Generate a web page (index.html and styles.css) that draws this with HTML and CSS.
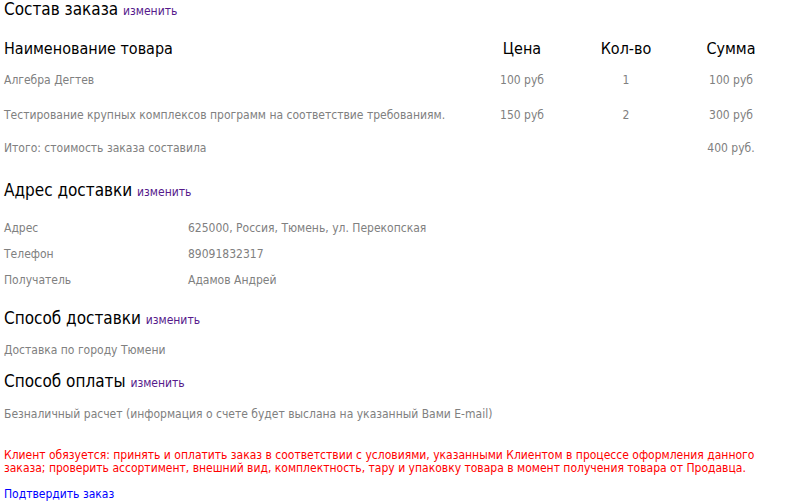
FILE: index.html
```html
<!DOCTYPE html>
<html lang="ru">
<head>
    <meta charset="UTF-8">
    <title>Оформление заказа</title>
    <link rel="stylesheet" href="styles.css">
</head>
<body>
    <!-- Состав заказа -->
    <h2 class="section-title order-title">Состав заказа <a href="#" class="edit-link">изменить</a></h2>
    <table class="order-table">
        <tr class="head-row">
            <th class="col-name">Наименование товара</th>
            <th class="col-price">Цена</th>
            <th class="col-qty">Кол-во</th>
            <th class="col-sum">Сумма</th>
        </tr>
        <tr class="row-1">
            <td>Алгебра Дегтев</td>
            <td class="center">100 руб</td>
            <td class="center qty">1</td>
            <td class="center">100 руб</td>
        </tr>
        <tr class="row-2">
            <td>Тестирование крупных комплексов программ на соответствие требованиям.</td>
            <td class="center">150 руб</td>
            <td class="center">2</td>
            <td class="center">300 руб</td>
        </tr>
        <tr class="total-row">
            <td colspan="3">Итого: стоимость заказа составила</td>
            <td class="center">400 руб.</td>
        </tr>
    </table>

    <!-- Адрес доставки -->
    <h2 class="section-title address-title">Адрес доставки <a href="#" class="edit-link">изменить</a></h2>
    <div class="address">
        <div class="address-row"><span class="label">Адрес</span><span>625000, Россия, Тюмень, ул. Перекопская</span></div>
        <div class="address-row"><span class="label">Телефон</span><span>89091832317</span></div>
        <div class="address-row"><span class="label">Получатель</span><span>Адамов Андрей</span></div>
    </div>

    <!-- Способ доставки -->
    <h2 class="section-title delivery-title">Способ доставки <a href="#" class="edit-link">изменить</a></h2>
    <p class="info">Доставка по городу Тюмени</p>

    <!-- Способ оплаты -->
    <h2 class="section-title payment-title">Способ оплаты <a href="#" class="edit-link">изменить</a></h2>
    <p class="info payment-info">Безналичный расчет (информация о счете будет выслана на указанный Вами E-mail)</p>

    <p class="notice">Клиент обязуется: принять и оплатить заказ в соответствии с условиями, указанными Клиентом в процессе оформления данного заказа; проверить ассортимент, внешний вид, комплектность, тару и упаковку товара в момент получения товара от Продавца.</p>

    <a href="#" class="confirm-link">Подтвердить заказ</a>
</body>
</html>
```

FILE: styles.css
```css
body {
    margin: 0;
    padding: 0 4px;
    background-color: #ffffff;
    font-family: "DejaVu Sans Condensed", "DejaVu Sans", sans-serif;
    font-stretch: condensed;
    font-size: 12px;
    color: #808080;
}

.section-title {
    margin: 0;
    font-size: 17px;
    font-weight: normal;
    line-height: 20px;
    color: #000000;
}

.order-title {
    line-height: 18px;
}

.edit-link {
    font-size: 12px;
    line-height: 1;
    color: #551a8b;
    text-decoration: none;
}

.order-table {
    width: 780px;
    margin-top: 15px;
    border-collapse: collapse;
}

.order-table th,
.order-table td {
    padding: 0;
    text-align: left;
}

.order-table th {
    font-size: 16px;
    font-weight: normal;
    color: #000000;
    height: 31px;
}

.order-table .col-name {
    width: 466px;
}

.order-table .col-price,
.order-table .col-qty {
    width: 104px;
    text-align: center;
}

.order-table .col-sum {
    width: 106px;
    text-align: center;
}

.order-table td.center {
    text-align: center;
}

.row-1 td {
    height: 32px;
}

.row-2 td {
    height: 38px;
}

.total-row td {
    height: 28px;
}

.address-title {
    margin-top: 18px;
}

.address {
    margin-top: 15px;
}

.address-row {
    display: flex;
    height: 26px;
    align-items: center;
}

.address-row .label {
    width: 184px;
}

.delivery-title {
    margin-top: 15px;
}

.info {
    margin: 12px 0 0;
    line-height: 20px;
}

.payment-title {
    margin-top: 11px;
}

.payment-info {
    margin-top: 13px;
}

.notice {
    margin: 25px 0 0;
    line-height: 13px;
    color: #ff0000;
}

.confirm-link {
    display: block;
    margin-top: 9px;
    line-height: 20px;
    color: #0000ff;
    text-decoration: none;
}
```
